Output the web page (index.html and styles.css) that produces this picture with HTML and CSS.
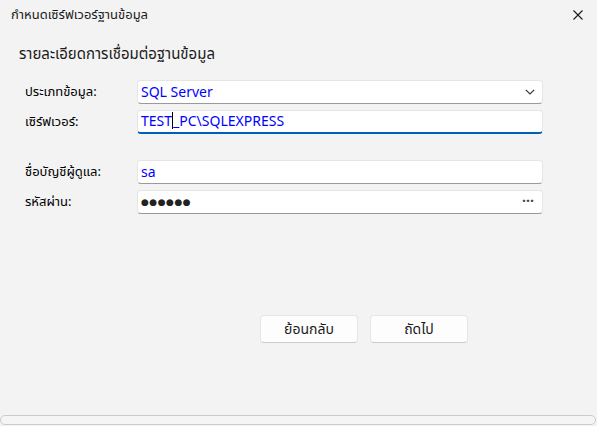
FILE: index.html
```html
<!DOCTYPE html>
<html lang="th">
<head>
  <meta charset="UTF-8" />
  <title>กำหนดเซิร์ฟเวอร์ฐานข้อมูล</title>
  <link rel="stylesheet" href="styles.css">
</head>
<body>
  <div class="window">
    <div class="titlebar">
      <span class="title">กำหนดเซิร์ฟเวอร์ฐานข้อมูล</span>
      <button class="close-btn" aria-label="close">
        <svg width="10" height="10" viewBox="0 0 10 10">
          <path d="M0.5 0.5 L9.5 9.5 M9.5 0.5 L0.5 9.5" stroke="#1a1a1a" stroke-width="1.1" fill="none" />
        </svg>
      </button>
    </div>

    <h1 class="heading">รายละเอียดการเชื่อมต่อฐานข้อมูล</h1>

    <div class="form">
      <div class="group">
        <div class="row">
          <label>ประเภทข้อมูล:</label>
          <div class="field">
            <span class="value">SQL Server</span>
            <svg class="chevron" width="10" height="6" viewBox="0 0 10 6">
              <path d="M0.8 0.8 L5 5 L9.2 0.8" stroke="#333" stroke-width="1.2" fill="none" />
            </svg>
          </div>
        </div>
        <div class="row">
          <label>เซิร์ฟเวอร์:</label>
          <div class="field focused">
            <span class="value">TEST<span class="caret"></span>_PC\SQLEXPRESS</span>
          </div>
        </div>
      </div>

      <div class="group">
        <div class="row">
          <label>ชื่อบัญชีผู้ดูแล:</label>
          <div class="field">
            <span class="value">sa</span>
          </div>
        </div>
        <div class="row">
          <label>รหัสผ่าน:</label>
          <div class="field">
            <span class="dots">●●●●●●</span>
            <span class="more">···</span>
          </div>
        </div>
      </div>
    </div>

    <div class="actions">
      <button class="btn">ย้อนกลับ</button>
      <button class="btn">ถัดไป</button>
    </div>

    <div class="progress"></div>
  </div>
</body>
</html>
```

FILE: styles.css
```css
html, body {
  margin: 0;
  padding: 0;
  height: 100%;
}

body {
  background-color: #f3f3f3;
  color: #000;
  font-family: Tahoma, "Leelawadee UI", "Noto Sans Thai", "DejaVu Sans", sans-serif;
  font-size: 13px;
}

.window {
  height: 426px;
  display: flex;
  flex-direction: column;
  overflow: hidden;
}

.titlebar {
  height: 29px;
  display: flex;
  align-items: center;
  justify-content: space-between;
  padding-left: 11px;
}

.title {
  font-size: 13px;
  color: #1a1a1a;
}

.close-btn {
  width: 46px;
  height: 29px;
  border: none;
  background: transparent;
  display: flex;
  align-items: center;
  justify-content: center;
  padding: 0;
  margin-right: -4px;
}

.heading {
  margin: 15px 0 0 19px;
  font-size: 15px;
  font-weight: normal;
  color: #1a1a1a;
  line-height: 22px;
}

.form {
  margin-top: 14px;
  padding-left: 25px;
  display: flex;
  flex-direction: column;
  gap: 26px;
}

.group {
  display: flex;
  flex-direction: column;
  gap: 6px;
}

.row {
  display: flex;
  align-items: center;
}

.row label {
  width: 112px;
}

.field {
  box-sizing: border-box;
  width: 406px;
  height: 24px;
  background-color: #fff;
  border: 1px solid #e5e5e5;
  border-bottom: 1px solid #9a9a9a;
  border-radius: 4px;
  display: flex;
  align-items: center;
  justify-content: space-between;
  padding: 0 8px 0 3px;
}

.field.focused {
  border-bottom: 2px solid #005fb8;
}

.value {
  color: #0000ff;
  font-size: 14px;
  white-space: pre;
}

.caret {
  display: inline-block;
  width: 1px;
  height: 17px;
  background-color: #000;
  vertical-align: -3px;
}

.chevron {
  margin-right: -1px;
}

.dots {
  font-size: 9px;
  letter-spacing: 0.5px;
  color: #222;
}

.more {
  font-size: 14px;
  font-weight: bold;
  color: #444;
  line-height: 10px;
}

.actions {
  margin-top: 101px;
  padding-left: 260px;
  display: flex;
  gap: 12px;
}

.btn {
  box-sizing: border-box;
  width: 98px;
  height: 28px;
  background-color: #fdfdfd;
  border: 1px solid #e5e5e5;
  border-bottom-color: #cccccc;
  border-radius: 4px;
  font-family: inherit;
  font-size: 14px;
  color: #1a1a1a;
  padding: 0;
}

.progress {
  margin-top: auto;
  margin-bottom: 1px;
  margin-right: 1px;
  height: 10px;
  box-sizing: border-box;
  border: 1px solid #cccccc;
  border-radius: 5px;
  background-color: #f5f5f5;
}
```
